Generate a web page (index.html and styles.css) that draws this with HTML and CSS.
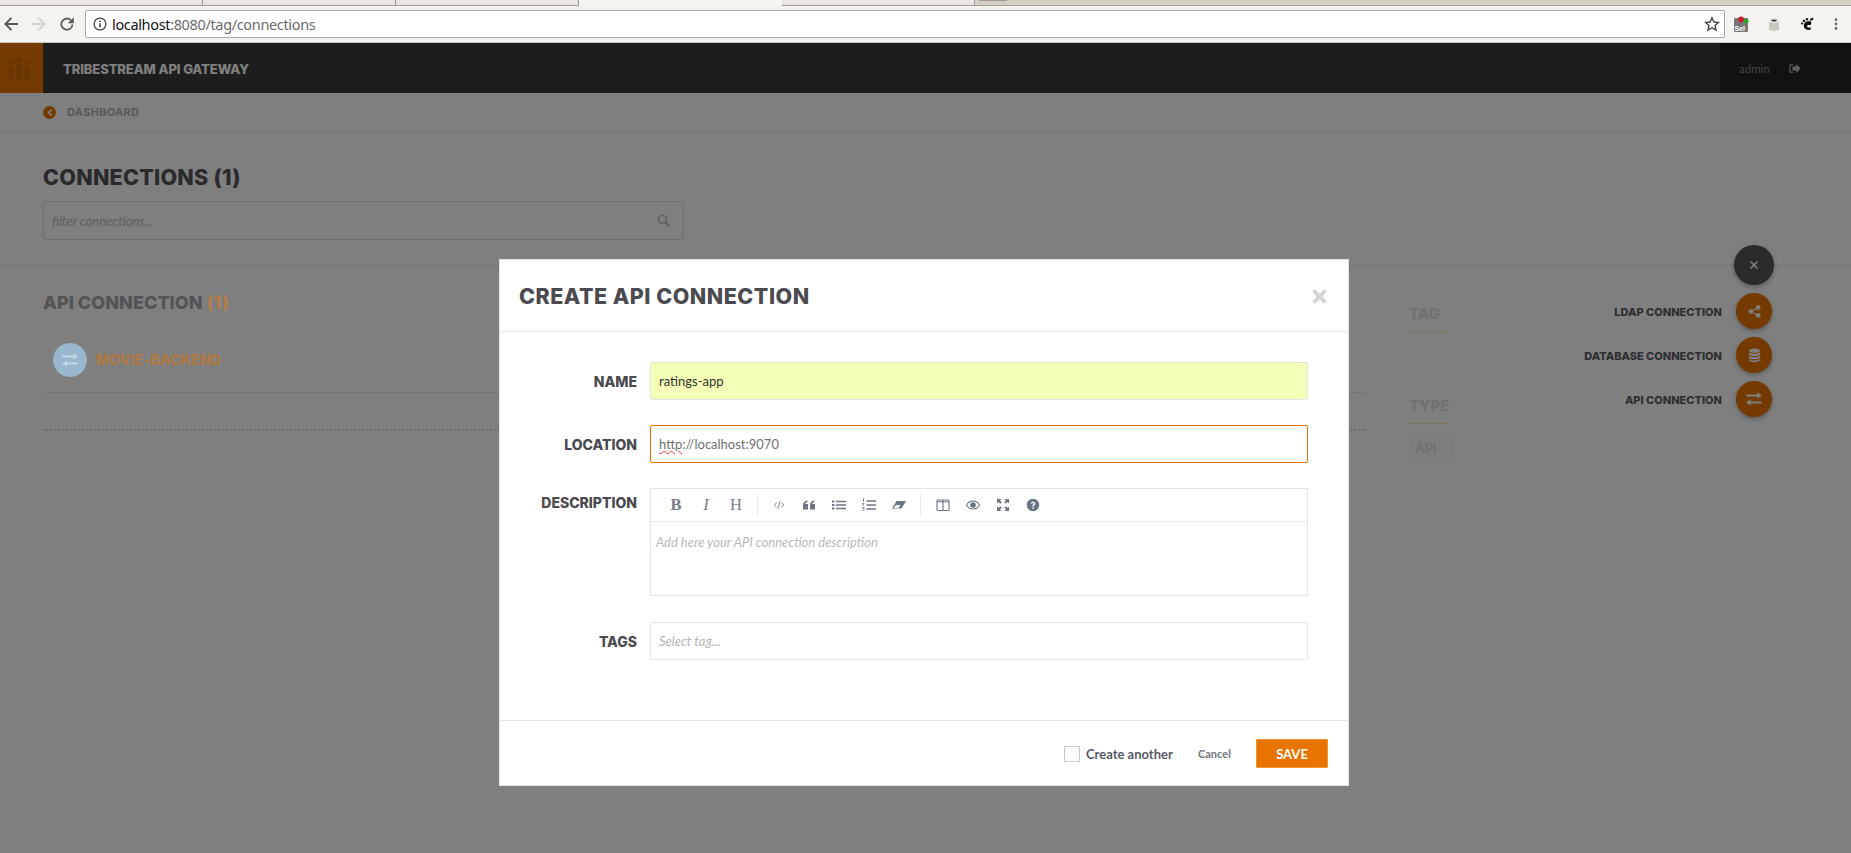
FILE: index.html
```html
<!DOCTYPE html>
<html lang="en">
<head>
<meta charset="utf-8">
<title>Tribestream API Gateway</title>
<link rel="stylesheet" href="styles.css">
</head>
<body>
<div class="tabstrip">
  <div class="tab tab-a"></div>
  <div class="tab tab-b"></div>
  <div class="tab tab-c"></div>
  <div class="tab tab-active"></div>
  <div class="tab tab-d"></div>
  <div class="strip-rest"><span class="strip-mark"></span></div>
</div>
<div class="toolbar">
  <svg class="nav-icon" viewBox="0 0 16 16"><path d="M15 7H4.800l4.400-4.400L7.800 1.200 1 8l6.800 6.800 1.400-1.400L4.800 9H15z" fill="#5a5a5a"/></svg>
  <svg class="nav-icon" viewBox="0 0 16 16"><path d="M1 7h10.200L6.800 2.600l1.400-1.400L15 8l-6.800 6.800-1.400-1.400L11.200 9H1z" fill="#d2d2d2"/></svg>
  <svg class="nav-icon" viewBox="0 0 16 16"><path d="M13.500 8.500a5.600 5.600 0 1 1-1.600-4.300" fill="none" stroke="#5a5a5a" stroke-width="1.800"/><path d="M14.800 1.200v6h-6z" fill="#5a5a5a"/></svg>
  <div class="omnibox">
    <svg class="info" viewBox="0 0 16 16"><circle cx="8" cy="8" r="6.800" fill="none" stroke="#444" stroke-width="1.400"/><path d="M7.100 7h1.800v4.800H7.100zM7.100 4h1.800v1.800H7.100z" fill="#444"/></svg>
    <span class="url"><span class="host">localhost</span>:8080/tag/connections</span>
    <svg class="star" viewBox="0 0 16 16"><path d="M8 1.800l1.900 4.200 4.500.5-3.400 3 1 4.500L8 11.700 4 14l1-4.500-3.400-3 4.500-.5z" fill="none" stroke="#444" stroke-width="1.400"/></svg>
  </div>
  <div class="extensions">
    <svg class="ext" viewBox="0 0 16 16"><rect x="1" y="2" width="14" height="14" rx="1" fill="#777"/><text x="1.500" y="14.500" class="ext-text">Sel</text><circle cx="8" cy="3.500" r="3" fill="#c8202a"/><circle cx="13" cy="5" r="2.500" fill="#2aa52a"/></svg>
    <svg class="ext" viewBox="0 0 16 16"><path d="M3 4h10v10q-5 2-10 0z" fill="#c9c9c2"/><ellipse cx="8" cy="4.500" rx="5" ry="2.300" fill="#eee"/><ellipse cx="8" cy="4.500" rx="3" ry="1" fill="#333"/></svg>
    <svg class="ext" viewBox="0 0 16 16"><path d="M11 5c-5 0-7 3-6 6 .8 3 5 3.600 7 2.300l-.5-2c-2 .8-3.500.2-3.400-1.200.1-1.300 1.700-1.500 3.400-.8l1-2.800z" fill="#111"/><circle cx="5" cy="5" r="1.300" fill="#111"/><circle cx="8" cy="3.200" r="1.200" fill="#111"/><circle cx="3" cy="7.500" r="1.100" fill="#111"/><path d="M11 3l3-1.500.5 2-3 1.500z" fill="#111"/></svg>
    <svg class="ext-menu" viewBox="0 0 16 16"><circle cx="8" cy="3" r="1.600" fill="#666"/><circle cx="8" cy="8" r="1.600" fill="#666"/><circle cx="8" cy="13" r="1.600" fill="#666"/></svg>
  </div>
</div>

<div class="viewport">
  <header class="appbar">
    <div class="logo">
      <svg viewBox="0 0 22 23" class="logo-icon"><circle cx="3" cy="5" r="2.600"/><circle cx="11" cy="3" r="3"/><circle cx="19" cy="6" r="2.400"/><rect x="0" y="9" width="6" height="14" rx="2"/><rect x="8" y="7" width="6" height="16" rx="2"/><rect x="16" y="9.500" width="6" height="13.500" rx="2"/></svg>
    </div>
    <div class="brand">TRIBESTREAM API GATEWAY</div>
    <div class="user">
      <span>admin</span>
      <svg class="logout" viewBox="0 0 14 12"><path d="M5 1H1.500A1 1 0 0 0 .5 2v8a1 1 0 0 0 1 1H5V9.700H1.800V2.300H5z" fill="#fff"/><path d="M4 3.700h4.500V.8L13.500 6l-5 5.200V8.300H4z" fill="#fff"/></svg>
    </div>
  </header>

  <nav class="crumb">
    <svg class="crumb-icon" viewBox="0 0 14 14"><circle cx="7" cy="7" r="7" fill="#ea7400"/><path d="M8.500 3.200l1.300 1.300L7.300 7l2.500 2.500-1.300 1.300L4.700 7z" fill="#fff"/></svg>
    <span>DASHBOARD</span>
  </nav>

  <section class="hero">
    <h1>CONNECTIONS (1)</h1>
    <div class="filter">
      <span>filter connections...</span>
      <svg class="search" viewBox="0 0 14 14"><circle cx="5.800" cy="5.800" r="4.300" fill="none" stroke="#c8c8c8" stroke-width="2"/><path d="M9 9l4 4" stroke="#c8c8c8" stroke-width="2.400"/></svg>
    </div>
  </section>

  <main class="content">
    <div class="list">
      <h2>API CONNECTION <span class="count above">(1)</span></h2>
      <div class="row">
        <div class="row-icon above">
          <svg class="swap" viewBox="0 0 16 14"><use href="#swap-glyph"/></svg>
        </div>
        <span class="row-name above">MOVIE-BACKEND</span>
      </div>
      <div class="dotted"></div>
    </div>
    <aside class="side">
      <h3>TAG</h3>
      <h3 class="type-head">TYPE</h3>
      <span class="chip">API</span>
    </aside>
  </main>

  <div class="fabs">
    <div class="fab-row"><button class="fab fab-close"><svg viewBox="0 0 10 10" class="x"><path d="M1.500 1.500l7 7M8.500 1.500l-7 7" stroke="#fff" stroke-width="1.700"/></svg></button></div>
    <div class="fab-row"><span>LDAP CONNECTION</span><button class="fab"><svg viewBox="0 0 14 14" class="fab-icon"><circle cx="11" cy="2.800" r="2.500" fill="#fff"/><circle cx="3" cy="7" r="2.500" fill="#fff"/><circle cx="11" cy="11.200" r="2.500" fill="#fff"/><path d="M11 2.800L3 7l8 4.200" fill="none" stroke="#fff" stroke-width="1.200"/></svg></button></div>
    <div class="fab-row"><span>DATABASE CONNECTION</span><button class="fab"><svg viewBox="0 0 14 16" class="fab-icon db"><ellipse cx="7" cy="2.800" rx="6" ry="2.300" fill="#fff"/><path d="M1 4.500c1.500 2 10.500 2 12 0v2.300c-1.500 2.200-10.500 2.200-12 0zM1 8.200c1.500 2 10.500 2 12 0v2.300c-1.500 2.200-10.500 2.200-12 0zM1 11.800c1.500 2 10.500 2 12 0v1.400c-1.500 2.600-10.500 2.600-12 0z" fill="#fff"/></svg></button></div>
    <div class="fab-row"><span>API CONNECTION</span><button class="fab"><svg class="fab-icon wide" viewBox="0 0 16 14"><use href="#swap-glyph"/></svg></button></div>
  </div>

  <div class="overlay"></div>

  <div class="modal">
    <div class="modal-head">
      <h2>CREATE API CONNECTION</h2>
      <svg class="close" viewBox="0 0 14 14"><path d="M2.500 2.500l9 9M11.500 2.500l-9 9" stroke="#d5d5d5" stroke-width="3.600" stroke-linecap="round"/></svg>
    </div>
    <form class="modal-body">
      <label class="field">
        <span class="label">NAME</span>
        <span class="input input-filled">ratings-app</span>
      </label>
      <label class="field">
        <span class="label">LOCATION</span>
        <span class="input input-focus"><span class="misspelt">http</span>://localhost:9070</span>
      </label>
      <div class="field field-top">
        <span class="label">DESCRIPTION</span>
        <div class="editor">
          <div class="editor-tools">
            <b class="serif-tool">B</b>
            <i class="serif-tool">I</i>
            <span class="serif-tool">H</span>
            <span class="sep"></span>
            <svg class="tool tool-sm" viewBox="0 0 14 14"><path d="M4.500 4L1.500 7l3 3M9.500 4l3 3-3 3M8 2.500L6 11.500" fill="none" stroke="#6b7484" stroke-width="1"/></svg>
            <svg class="tool" viewBox="0 0 14 14"><path d="M1 7.500C1 4.500 2.500 3 5.500 2.500V4C4 4.300 3.300 5 3.300 6H6v5.500H1zM8 7.500C8 4.500 9.500 3 12.500 2.500V4c-1.500.3-2.200 1-2.200 2H13v5.500H8z" fill="#6b7484"/></svg>
            <svg class="tool" viewBox="0 0 14 14"><path d="M0 2.500h2.400v2H0zM0 6h2.400v2H0zM0 9.500h2.400v2H0zM4 2.700h10v1.600H4zM4 6.200h10v1.600H4zM4 9.700h10v1.600H4z" fill="#6b7484"/></svg>
            <svg class="tool" viewBox="0 0 14 14"><path d="M1 .5h1v3H1zM.3 5h2v.7l-1 1.300h1v.6h-2v-.7l1-1.200h-1zM.3 9h2v3.500h-2v-.6h1.200v-.8H.8v-.6h.7v-.8H.3zM4.500 2.200H14v1.600H4.500zM4.500 6.200H14v1.600H4.500zM4.500 10.200H14v1.600H4.500z" fill="#6b7484"/></svg>
            <svg class="tool" viewBox="0 0 14 14"><path d="M4.500 3H14L9.500 10.500H0z" fill="#6b7484"/><path d="M1.800 10L4 7h4.500l-2 3z" fill="#fff"/></svg>
            <span class="sep sep-b"></span>
            <svg class="tool" viewBox="0 0 14 14"><rect x="1" y="2" width="12" height="10.500" rx="1" fill="none" stroke="#6b7484" stroke-width="1.100"/><path d="M1 3.700h12M7 2v10.500" stroke="#6b7484" stroke-width="1.100"/></svg>
            <svg class="tool" viewBox="0 0 14 14"><path d="M.5 7C2 4.300 4.300 3 7 3s5 1.300 6.500 4C12 9.700 9.700 11 7 11S2 9.700.5 7z" fill="none" stroke="#6b7484" stroke-width="1.100"/><circle cx="7" cy="7" r="2.800" fill="#6b7484"/></svg>
            <svg class="tool" viewBox="0 0 14 14"><path d="M1 1h4.500L4 2.500l1.800 1.800-1.500 1.500L2.500 4 1 5.500zM13 1v4.500L11.500 4 9.700 5.800 8.200 4.300 10 2.500 8.500 1zM1 13V8.500L2.500 10l1.800-1.800 1.500 1.500L4 11.500 5.500 13zM13 13H8.500l1.500-1.500-1.800-1.800 1.500-1.500 1.800 1.800L13 8.500z" fill="#6b7484"/></svg>
            <svg class="tool" viewBox="0 0 14 14"><circle cx="7" cy="7" r="6.200" fill="#6b7484"/><path d="M4.800 5.500C5 3 9.300 3 9.300 5.500c0 1.700-1.600 1.500-1.600 3H6.300C6.300 6.300 7.800 6.500 7.800 5.500c0-.9-1.500-.9-1.600.2zM6.300 9.300h1.400v1.400H6.300z" fill="#fff"/></svg>
          </div>
          <div class="editor-text">Add here your API connection description</div>
        </div>
      </div>
      <label class="field field-tags">
        <span class="label">TAGS</span>
        <span class="input input-tags">Select tag...</span>
      </label>
    </form>
    <div class="modal-foot">
      <span class="checkbox"></span>
      <span class="another">Create another</span>
      <span class="cancel">Cancel</span>
      <button class="save">SAVE</button>
    </div>
  </div>
</div>

<svg class="defs" width="0" height="0"><defs><g id="swap-glyph"><path d="M0 3.200h11V.8l4.500 3.400L11 7.400V5.200H0z" fill="#fff" transform="translate(.3 -.6)"/><path d="M16 10.800H5v2.400L.5 9.800 5 6.600v2.200h11z" fill="#fff" transform="translate(-.3 .6)"/></g></defs></svg>
</body>
</html>
```

FILE: styles.css
```css
* { box-sizing: border-box; }
html, body { height: 100%; }
body {
  margin: 0;
  width: 1851px;
  height: 853px;
  overflow: hidden;
  display: flex;
  flex-direction: column;
  background: #fff;
  font-family: "Lato", "Liberation Sans", sans-serif;
  color: #4a4a4a;
}
.defs { position: absolute; }

/* browser chrome */
.tabstrip { height: 6px; display: flex; flex: none; background: #d6cfc4; }
.tab { height: 6px; background: #e9e6e1; border-right: 1px solid #9d9a95; border-bottom: 1px solid #a3a09a; }
.tab-a { width: 203px; }
.tab-b { width: 193px; }
.tab-c { width: 183px; }
.tab-active { width: 203px; background: #f6f5f2; border: 0; }
.tab-d { width: 193px; }
.strip-rest { flex: 1; border-bottom: 1px solid #a3a09a; height: 6px; padding-left: 4px; }
.strip-mark { display: block; width: 28px; height: 1px; background: #999; }
.toolbar {
  height: 37px;
  flex: none;
  display: flex;
  align-items: center;
  background: #f5f3f0;
  border-bottom: 1px solid #c8c6c2;
  padding-left: 3px;
}
.nav-icon { width: 16px; height: 16px; margin-right: 12px; flex: none; }
.omnibox {
  width: 1640px;
  height: 28px;
  display: flex;
  align-items: center;
  background: #fff;
  border: 1px solid #a9a9a9;
  border-radius: 2px;
  margin-left: -2px;
  padding: 0 4px 0 7px;
  flex: none;
}
.info { width: 14px; height: 14px; margin-right: 5px; flex: none; }
.url { flex: 1; font: 14.500px "Noto Sans", sans-serif; color: #6b6b6b; letter-spacing: -.35px; }
.host { color: #111; }
.star { width: 16px; height: 16px; flex: none; }
.extensions { flex: 1; display: flex; align-items: center; padding-left: 8px; }
.ext { width: 16px; height: 16px; margin-right: 17px; flex: none; }
.ext-text { font: bold 7px "Liberation Sans", sans-serif; fill: #fff; }
.ext-menu { width: 14px; height: 14px; flex: none; margin-left: -3px; }

/* app page */
.viewport { position: relative; flex: 1; overflow: hidden; background: #fff; }
.appbar { height: 50px; display: flex; align-items: center; background: #393a3d; }
.logo { width: 43px; height: 50px; background: #ea7400; display: flex; align-items: center; justify-content: center; padding: 1px 6px 0 0; }
.logo-icon { width: 22px; height: 23px; fill: #d26c00; }
.brand { flex: 1; padding: 2px 0 0 20px; font: 800 13px "Inter", sans-serif; color: #fff; letter-spacing: -.1px; }
.user {
  width: 131px;
  height: 50px;
  display: flex;
  align-items: center;
  padding-left: 19px;
  background: #24252a;
  color: #84878c;
  font-size: 11.500px;
}
.logout { width: 12px; height: 11px; margin-left: 19px; opacity: .7; }
.crumb {
  height: 39px;
  display: flex;
  align-items: center;
  padding-left: 43px;
  border-bottom: 1px solid #e6e6e6;
  font: 700 11px "Inter", sans-serif;
  color: #b5b5b5;
  letter-spacing: .3px;
}
.crumb-icon { width: 13px; height: 13px; margin-right: 11px; }
.hero { height: 134px; padding: 32px 43px 0; border-bottom: 1px solid #e6e6e6; }
.hero h1 { margin: 0 0 11px; font: 800 21.500px/26px "Inter", sans-serif; color: #54555b; letter-spacing: .27px; }
.filter {
  width: 641px;
  height: 39px;
  display: flex;
  align-items: center;
  justify-content: space-between;
  padding: 0 13px 0 8px;
  border: 1px solid #dedede;
  border-radius: 2px;
  color: #c0c0c0;
  font-style: italic;
  font-size: 13px;
}
.search { width: 13px; height: 13px; }
.content { display: flex; padding-left: 43px; height: 588px; }
.list { width: 1345px; flex: none; padding-right: 21px; }
.list h2 { margin: 25px 0 0; font: 800 18px/24px "Inter", sans-serif; color: #a8a8ac; letter-spacing: .05px; }
.above { position: relative; z-index: 2; }
.count { color: #b47d4b; }
.row {
  height: 78px;
  padding: 28px 0 0 10px;
  display: flex;
  align-items: flex-start;
  border-bottom: 1px solid #efefef;
}
.row-icon { width: 34px; height: 34px; border-radius: 50%; background: #96b7cd; display: flex; align-items: center; justify-content: center; }
.swap { width: 16px; height: 14px; opacity: .45; }
.row-name { margin: 9px 0 0 9px; font: 800 14px/16px "Inter", sans-serif; color: #b07a46; letter-spacing: .2px; }
.dotted { height: 38px; border-bottom: 2px dotted #dcdcdc; }
.side { flex: 1; border-left: 1px solid #fbfbfb; padding: 39px 0 0 20px; }
.side h3 {
  width: 40px;
  margin: 0;
  padding-bottom: 8px;
  border-bottom: 1px solid #ffe0b8;
  font: 800 15px/18px "Inter", sans-serif;
  color: #e2e2e2;
}
.side .type-head { margin-top: 65px; }
.chip {
  display: block;
  width: 46px;
  height: 25px;
  margin-top: 12px;
  padding-left: 6px;
  background: #fafafa;
  color: #e2e2e2;
  font: 600 13px/25px "Inter", sans-serif;
}

.fabs {
  position: absolute;
  top: 202px;
  right: 79px;
  display: flex;
  flex-direction: column;
  align-items: flex-end;
  gap: 8px;
}
.fab-row { display: flex; align-items: center; gap: 14px; font: 800 11px "Inter", sans-serif; color: #5c5f66; height: 36px; }
.fab-row span { padding-top: 2px; }
.fab-row:first-child { height: 40px; margin-right: -2px; }
.fab {
  width: 36px;
  height: 36px;
  border: 0;
  padding: 0;
  border-radius: 50%;
  background: #ea7400;
  box-shadow: 0 2px 5px rgba(0,0,0,.3);
  display: flex;
  align-items: center;
  justify-content: center;
}
.fab-close { width: 40px; height: 40px; background: #565656; }
.x { width: 10px; height: 10px; }
.fab-icon { width: 13px; height: 13px; }
.fab-icon.db { width: 13px; height: 15px; }
.fab-icon.wide { width: 16px; height: 14px; }

.overlay { position: absolute; inset: 0; z-index: 1; background: rgba(0,0,0,.5); }

.modal {
  position: absolute;
  z-index: 3;
  left: 499px;
  top: 216px;
  width: 850px;
  height: 527px;
  background: #fff;
  display: flex;
  flex-direction: column;
  outline: 1px solid #e4e4e4;
  outline-offset: -1px;
}
.modal-head {
  height: 73px;
  flex: none;
  padding: 2px 21px 0 20px;
  display: flex;
  align-items: center;
  justify-content: space-between;
  border-bottom: 1px solid #e6e6e6;
}
.modal-head h2 { margin: 0; font: 800 21.500px "Inter", sans-serif; color: #4a4a4f; letter-spacing: .5px; }
.close { width: 15px; height: 15px; margin-right: 1px; }
.modal-body { flex: 1; padding: 30px 41px 0 0; display: flex; flex-direction: column; gap: 25px; }
.field { display: flex; align-items: center; }
.field-top { align-items: flex-start; }
.field-tags { margin-top: 1px; }
.label {
  width: 138px;
  flex: none;
  text-align: right;
  margin-right: 13px;
  font: 800 14px "Inter", sans-serif;
  color: #4a4a4f;
}
.field-top .label { padding-top: 6px; }
.input {
  flex: 1;
  height: 38px;
  display: flex;
  align-items: center;
  padding: 0 8px;
  border: 1px solid #e4e4e4;
  border-radius: 2px;
  font-size: 13px;
  background: #fff;
  white-space: pre;
}
.input-filled { background: #f3feb7; color: #333; }
.input-focus { border-color: #ea7400; color: #6f6f6f; }
.misspelt { text-decoration: underline wavy #e33; text-decoration-thickness: 1px; }
.input-tags { color: #b5b5b5; font-style: italic; }
.editor { flex: 1; height: 108px; border: 1px solid #e4e4e4; display: flex; flex-direction: column; }
.editor-tools {
  height: 33px;
  flex: none;
  display: flex;
  align-items: center;
  padding-left: 10px;
  border-bottom: 1px solid #e9e9e9;
}
.serif-tool { width: 30px; flex: none; text-align: center; font: 16.500px "Liberation Serif", serif; color: #767e8c; }
b.serif-tool { font-weight: 700; }
i.serif-tool { font-style: italic; }
.sep { width: 1px; height: 22px; background: #e9e9e9; margin: 0 6px; flex: none; }
.sep-b { margin-right: 7px; }
.tool { width: 30px; height: 14px; flex: none; }
.tool-sm { height: 12px; }
.editor-text { padding: 12px 5px; color: #b9b9b9; font-style: italic; font-size: 13px; }
.modal-foot {
  height: 66px;
  flex: none;
  display: flex;
  align-items: center;
  padding: 1px 21px 1px 565px;
  border-top: 1px solid #e6e6e6;
  white-space: nowrap;
}
.checkbox { width: 16px; height: 16px; border: 1px solid #c8c8c8; flex: none; }
.another { margin-left: 6px; font-size: 13px; font-weight: 700; color: #555a66; width: 86px; flex: none; }
.cancel { margin-left: 26px; width: 32px; flex: none; font-size: 11px; font-weight: 700; color: #70757f; }
.save {
  margin-left: 26px;
  width: 72px;
  height: 29px;
  flex: none;
  border: 1px solid #f0902e;
  border-radius: 1px;
  background: #ea7400;
  color: #fff;
  font: 700 13px "Lato", sans-serif;
}
```
